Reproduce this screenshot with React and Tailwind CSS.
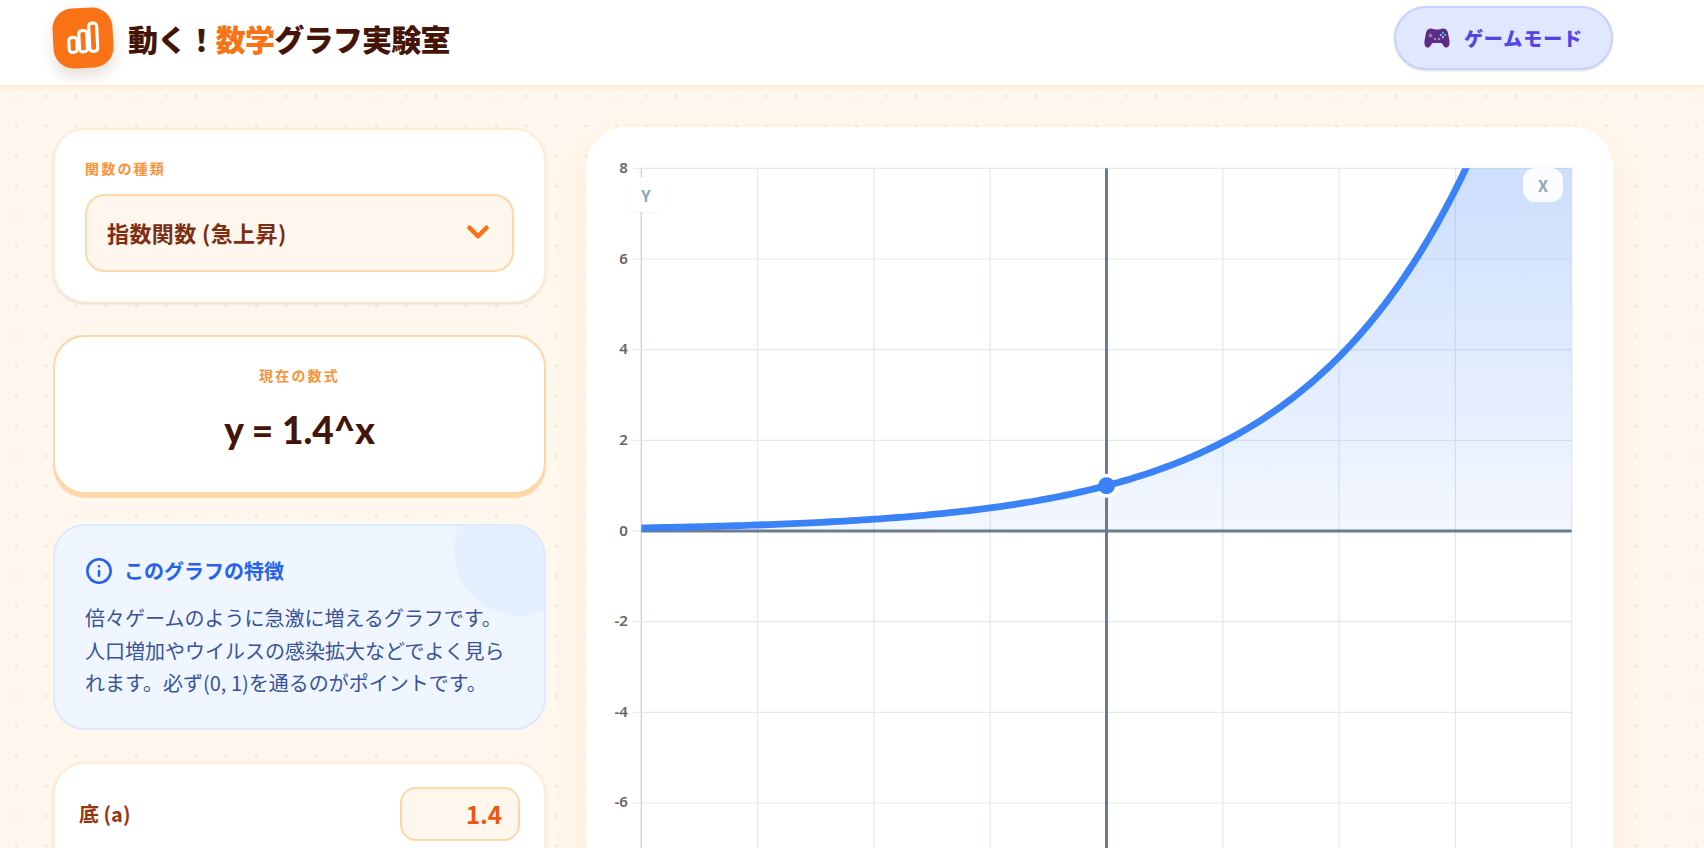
import React from "react";
import { ChevronDown, Info } from "lucide-react";

const X = (x) => 520.5 + x * 58.15;
const Y = (y) => 404 - y * 45.33;
const pts = [];
for (let x = -8; x <= 8.001; x += 0.1) pts.push([X(x), Math.max(Y(Math.pow(1.4, x)), -40)]);
const line = pts.map((p, i) => `${i ? "L" : "M"}${p[0].toFixed(2)} ${p[1].toFixed(2)}`).join(" ");
const area = `${line} L${X(8)} ${Y(0)} L${X(-8)} ${Y(0)} Z`;
const xs = [-8, -6, -4, -2, 0, 2, 4, 6, 8];
const ys = [8, 6, 4, 2, 0, -2, -4, -6, -8];

function Chart() {
  return (
    <svg width="1027" height="800" viewBox="0 0 1027 800" className="block">
      <defs>
        <linearGradient id="fill" gradientUnits="userSpaceOnUse" x1="0" y1={Y(8)} x2="0" y2={Y(0)}>
          <stop offset="0" stopColor="#3b82f6" stopOpacity="0.26" />
          <stop offset="1" stopColor="#3b82f6" stopOpacity="0.06" />
        </linearGradient>
        <clipPath id="plot">
          <rect x={X(-8)} y={Y(8)} width={X(8) - X(-8)} height={Y(-8) - Y(8)} />
        </clipPath>
      </defs>
      {ys.map((v) => (
        <line key={v} x1={X(-8)} x2={X(8)} y1={Y(v)} y2={Y(v)} stroke="#e2e8f0" strokeWidth="1.2" />
      ))}
      {xs.map((v) => (
        <line key={v} x1={X(v)} x2={X(v)} y1={Y(8)} y2={Y(-8)} stroke="#e2e8f0" strokeWidth="1.2" />
      ))}
      <line x1={X(-8)} x2={X(-8)} y1={Y(8)} y2={Y(-8)} stroke="#cbd5e1" strokeWidth="1.2" />
      {ys.map((v) => (
        <g key={v}>
          <line x1={X(-8) - 8} x2={X(-8)} y1={Y(v)} y2={Y(v)} stroke="#e2e8f0" strokeWidth="1.2" />
          <text x={X(-8) - 13.5} y={Y(v) + 4.5} textAnchor="end" fontSize="15" fontWeight="600" fill="#666666" fontFamily="'Noto Sans', sans-serif">{v}</text>
        </g>
      ))}
      <path d={area} fill="url(#fill)" clipPath="url(#plot)" />
      <line x1={X(-8)} x2={X(8)} y1={Y(0)} y2={Y(0)} stroke="#6b7b92" strokeWidth="3" />
      <line x1={X(0)} x2={X(0)} y1={Y(8)} y2={Y(-8)} stroke="#6b7b92" strokeWidth="3" />
      <circle cx={X(0)} cy={Y(1)} r="12" fill="#ffffff" />
      <path d={line} fill="none" stroke="#3b82f6" strokeWidth="6.800" strokeLinejoin="round" clipPath="url(#plot)" />
      <circle cx={X(0)} cy={Y(1)} r="8.500" fill="#3b82f6" />
    </svg>
  );
}

function Gamepad() {
  return (
    <svg width="26" height="22" viewBox="0 0 26 22" className="shrink-0">
      <path d="M7 1.5c-2.6 0-4.2 1.4-4.9 4L.6 13.6C.1 16.6 0.7 20 3 20.500c1.900.4 3.300-1.200 4.300-3.100.6-1.100 1.300-1.500 2.500-1.500h6.400c1.200 0 1.900.4 2.500 1.500 1 1.900 2.400 3.500 4.300 3.100 2.300-.5 2.900-3.900 2.400-6.900l-1.500-8.100c-.7-2.600-2.300-4-4.900-4-1.800 0-3 1-4.300 1h-3.400c-1.300 0-2.500-1-4.300-1z" fill="#5b2c83" />
      <path d="M6.500 6.500v4M4.500 8.500h4" stroke="#a78bc9" strokeWidth="1.500" />
      <circle cx="19" cy="5.800" r="1.100" fill="#38bdf8" />
      <circle cx="21.200" cy="8" r="1.100" fill="#2dd4bf" />
      <circle cx="16.800" cy="8" r="1.100" fill="#f0abfc" />
      <circle cx="19" cy="10.200" r="1.100" fill="#7dd3fc" />
      <circle cx="11" cy="12" r="1.200" fill="#a78bc9" />
      <circle cx="15" cy="12" r="1.200" fill="#a78bc9" />
    </svg>
  );
}

function LogoIcon() {
  return (
    <svg width="34" height="34" viewBox="0 0 32 32" fill="none" stroke="#ffffff" strokeWidth="3" strokeLinejoin="round">
      <rect x="2.500" y="15" width="7.500" height="14" rx="2.800" />
      <rect x="12.200" y="9" width="7.500" height="20" rx="2.800" />
      <rect x="21.900" y="2.500" width="7.500" height="26.500" rx="2.800" />
    </svg>
  );
}

export default function App() {
  return (
    <div
      className="h-[848px] overflow-hidden bg-[#fff7ed] bg-[radial-gradient(#fed7aa_0.6px,transparent_1px)] bg-[size:30px_30px] bg-[position:1px_-9px]"
      style={{ fontFamily: "'Noto Sans CJK JP', 'Noto Sans', sans-serif" }}
    >
      <header className="h-[87px] bg-white border-b-2 border-[#ffedd5] shadow-[0_2px_4px_rgba(255,237,213,0.6)] flex items-start justify-between pl-[53px] pr-[91px] pt-[6px]">
        <div className="flex items-center gap-[15px] pt-[2px]">
          <div className="w-[60px] h-[60px] -rotate-3 rounded-[20px] bg-[#f97316] shadow-[0_8px_14px_rgba(120,80,40,0.18)] flex items-center justify-center">
            <LogoIcon />
          </div>
          <h1 className="text-3xl tracking-tight font-black text-[#431407]">
            動く！<span className="text-[#f97316]">数学</span>グラフ実験室
          </h1>
        </div>
        <button className="w-[219px] h-[64px] rounded-full border-2 border-[#c7d2fe] bg-[#e0e7ff] shadow-sm flex items-center justify-center gap-[14px] text-[#4f46e5] font-black text-[19px] tracking-[0.05em]">
          <Gamepad />
          <span>ゲームモード</span>
        </button>
      </header>

      <main className="flex items-start gap-[40px] pl-[53px] pt-[41px]">
        <div className="w-[493px] shrink-0 flex flex-col gap-8">
          <section className="h-[175px] bg-white rounded-[32px] border-2 border-[#ffedd5] shadow-sm px-[30px] pt-[28px]">
            <div className="text-sm leading-5 font-bold text-[#fb923c] tracking-[2.2px] mb-4">関数の種類</div>
            <div className="h-[78px] rounded-[20px] border-2 border-[#fed7aa] bg-[#fff7ed] flex items-center justify-between pl-[20px] pr-[17px] pb-[2px]">
              <span className="text-[22px] font-bold text-[#7c2d12] tracking-[0.4px]">指数関数 (急上昇)</span>
              <ChevronDown size={34} strokeWidth={3.2} className="text-[#f97316]" />
            </div>
          </section>

          <section className="h-[159px] -mb-[2px] bg-white rounded-[32px] border-2 border-[#fed7aa] shadow-[0_4px_0_#fed7aa] pt-[28px] flex flex-col items-center">
            <div className="text-sm leading-5 font-bold text-[#fb923c] tracking-[2.2px] mb-[25px]">現在の数式</div>
            <div className="text-[37px] leading-10 font-black text-[#431407]" style={{ fontFamily: "'Lato', sans-serif" }}>y = 1.4^x</div>
          </section>

          <section className="relative overflow-hidden h-[206px] bg-[#eff6ff] rounded-[32px] border-2 border-[#dbeafe] px-[30px] pt-[31px]">
            <div className="absolute -top-[42px] -right-[42px] w-[132px] h-[132px] rounded-full bg-[#dbeafe] opacity-50" />
            <div className="relative flex items-center gap-[11px] mb-[17px]">
              <Info size={28} strokeWidth={2.2} className="text-[#2563eb]" />
              <h2 className="text-[20px] leading-7 font-bold text-[#2563eb]">このグラフの特徴</h2>
            </div>
            <p className="relative text-[20px] leading-[32.5px] text-[#3a5299]">
              倍々ゲームのように急激に増えるグラフです。人口増加やウイルスの感染拡大などでよく見られます。必ず(0, 1)を通るのがポイントです。
            </p>
          </section>

          <section className="h-[200px] bg-white rounded-[32px] border-2 border-[#ffedd5] shadow-sm px-[24px] pt-[23px]">
            <div className="flex items-center justify-between">
              <span className="text-[20px] font-bold text-[#9a3412]">底 (a)</span>
              <div className="w-[120px] h-[54px] rounded-2xl border-2 border-[#fed7aa] bg-[#fff7ed] flex items-center justify-end pr-[16px] text-2xl font-bold text-[#ea580c]">1.4</div>
            </div>
          </section>
        </div>

        <div className="relative w-[1027px] h-[900px] shrink-0 -mt-px bg-white rounded-[40px] shadow-[0_20px_40px_rgba(251,146,60,0.12)]">
          <Chart />
          <div className="absolute left-[40px] top-[50px] w-[40px] h-[35px] rounded-xl bg-white/90 shadow-[0_1px_3px_rgba(0,0,0,0.05)] flex items-center justify-center text-base font-bold text-[#94a3b8]">Y</div>
          <div className="absolute left-[937px] top-[41px] w-[40px] h-[34px] rounded-xl bg-white/90 flex items-center justify-center text-base font-bold text-[#94a3b8]">X</div>
        </div>
      </main>
    </div>
  );
}
